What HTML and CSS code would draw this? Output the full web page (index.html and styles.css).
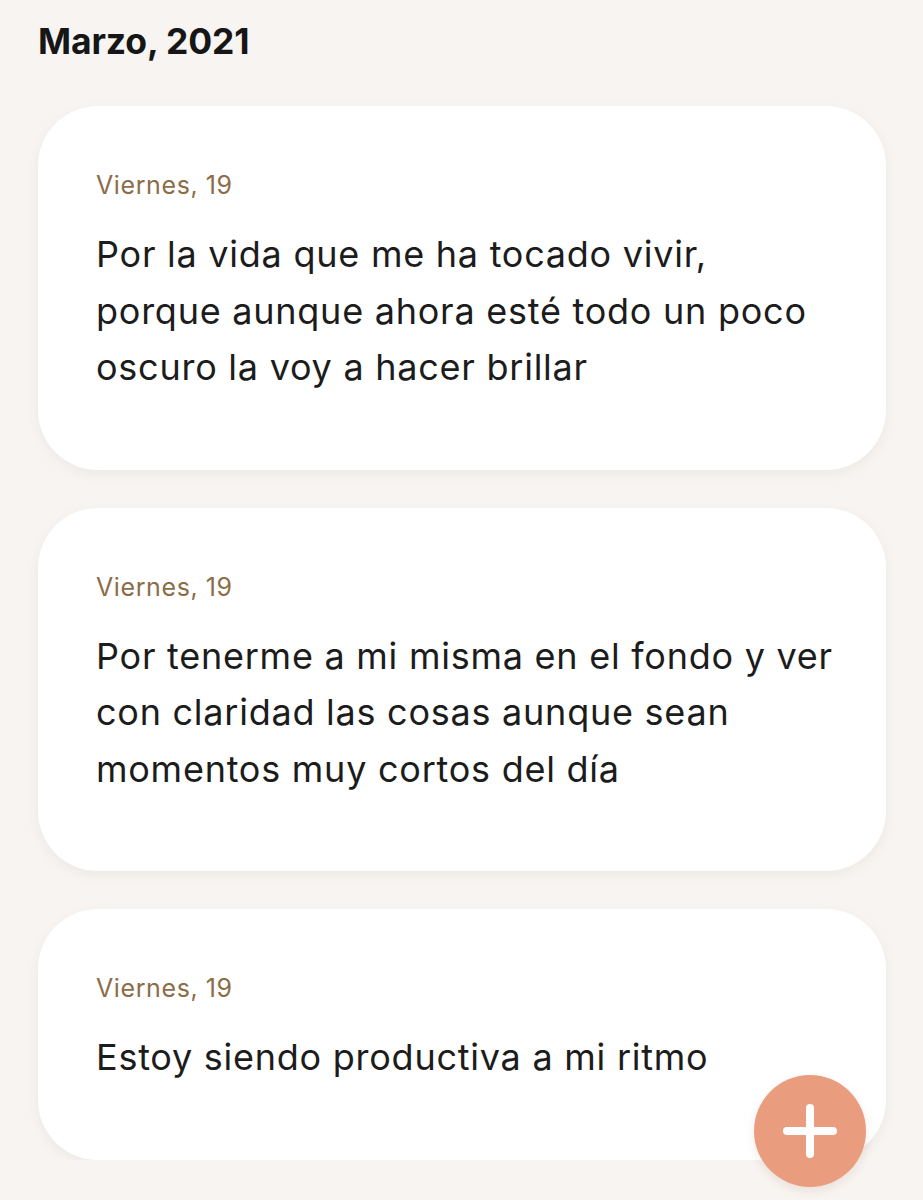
FILE: index.html
```html
<!DOCTYPE html>
<html lang="es">
<head>
<meta charset="utf-8">
<title>Marzo, 2021</title>
<link rel="stylesheet" href="styles.css">
</head>
<body>
<main class="page">
  <h1 class="month">Marzo, 2021</h1>
  <section class="list">
    <article class="card">
      <div class="date">Viernes, 19</div>
      <p class="text">Por la vida que me ha tocado vivir,<br>porque aunque ahora esté todo un poco oscuro la voy a hacer brillar</p>
    </article>
    <article class="card">
      <div class="date">Viernes, 19</div>
      <p class="text">Por tenerme a mi misma en el fondo y ver con claridad las cosas aunque sean momentos muy cortos del día</p>
    </article>
    <article class="card">
      <div class="date">Viernes, 19</div>
      <p class="text">Estoy siendo productiva a mi ritmo</p>
    </article>
  </section>
</main>
<button class="fab" aria-label="Añadir">
  <svg viewBox="0 0 112 112" width="112" height="112">
    <path d="M56 33 V79 M33 56 H79" stroke="#fff" stroke-width="8" stroke-linecap="round" fill="none"/>
  </svg>
</button>
</body>
</html>
```

FILE: styles.css
```css
html, body {
  margin: 0;
  padding: 0;
  background: #f7f4f1;
}
body {
  font-family: Inter, "Open Sans", "Liberation Sans", sans-serif;
  color: #1b1b1b;
}
.page {
  padding: 0 37px 0 38px;
}
.month {
  margin: 0;
  padding-top: 22px;
  font-size: 35.5px;
  line-height: 40px;
  font-weight: 700;
  color: #161616;
  letter-spacing: -0.1px;
}
.list {
  display: flex;
  flex-direction: column;
  gap: 38px;
  margin-top: 44px;
}
.card {
  background: #ffffff;
  border-radius: 60px;
  padding: 64px 44px 74px 58px;
  box-shadow: 0 4px 12px rgba(120, 100, 80, 0.07);
}
.date {
  font-size: 25px;
  line-height: 30px;
  color: #8b6d49;
  letter-spacing: 0.6px;
}
.text {
  margin: 26px 0 0 0;
  font-size: 36px;
  line-height: 56.5px;
  color: #1c1c1c;
  letter-spacing: 0.75px;
}
.fab {
  position: fixed;
  right: 57px;
  bottom: 13px;
  width: 112px;
  height: 112px;
  border: none;
  border-radius: 50%;
  padding: 0;
  background: #e99d7e;
  display: flex;
  align-items: center;
  justify-content: center;
  box-shadow: 0 4px 10px rgba(150, 90, 60, 0.12);
}
.fab svg {
  display: block;
}
```
